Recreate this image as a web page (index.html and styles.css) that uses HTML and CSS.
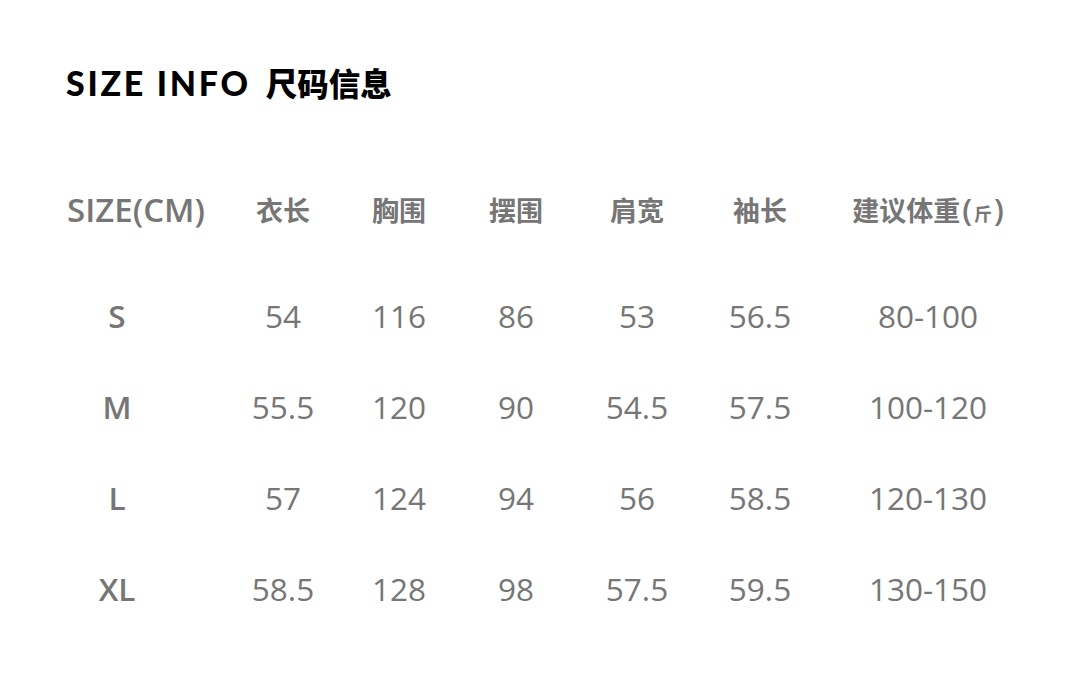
FILE: index.html
```html
<!DOCTYPE html>
<html lang="zh">
<head>
<meta charset="utf-8">
<title>Size Info</title>
<link rel="stylesheet" href="styles.css">
</head>
<body>
<div class="page">
  <h1 class="title"><span class="title-en">SIZE INFO</span><span class="title-cn">尺码信息</span></h1>
  <div class="table">
    <div class="cell head en">SIZE(CM)</div>
    <div class="cell head">衣长</div>
    <div class="cell head">胸围</div>
    <div class="cell head">摆围</div>
    <div class="cell head">肩宽</div>
    <div class="cell head">袖长</div>
    <div class="cell head">建议体重<span class="unit">(<small>斤</small>)</span></div>

    <div class="cell size">S</div>
    <div class="cell">54</div>
    <div class="cell">116</div>
    <div class="cell">86</div>
    <div class="cell">53</div>
    <div class="cell">56.5</div>
    <div class="cell">80-100</div>

    <div class="cell size">M</div>
    <div class="cell">55.5</div>
    <div class="cell">120</div>
    <div class="cell">90</div>
    <div class="cell">54.5</div>
    <div class="cell">57.5</div>
    <div class="cell">100-120</div>

    <div class="cell size">L</div>
    <div class="cell">57</div>
    <div class="cell">124</div>
    <div class="cell">94</div>
    <div class="cell">56</div>
    <div class="cell">58.5</div>
    <div class="cell">120-130</div>

    <div class="cell size">XL</div>
    <div class="cell">58.5</div>
    <div class="cell">128</div>
    <div class="cell">98</div>
    <div class="cell">57.5</div>
    <div class="cell">59.5</div>
    <div class="cell">130-150</div>
  </div>
</div>
</body>
</html>
```

FILE: styles.css
```css
html, body {
  margin: 0;
  padding: 0;
  background: #ffffff;
}

.page {
  width: 1080px;
  height: 680px;
  box-sizing: border-box;
  padding-top: 60px;
  overflow: hidden;
}

.title {
  margin: 0 0 0 66px;
  height: 44px;
  line-height: 44px;
  color: #000;
  font-weight: 900;
  white-space: nowrap;
}

.title-en {
  font-family: "Lato", "Noto Sans", sans-serif;
  font-size: 34px;
  font-weight: 900;
  letter-spacing: 2.7px;
}

.title-cn {
  font-family: "Noto Sans CJK SC", sans-serif;
  font-size: 31.5px;
  font-weight: 900;
  margin-left: 15px;
}

.table {
  margin-top: 44px;
  margin-left: 20px;
  display: grid;
  grid-template-columns: 194px 138px 94px 140px 102px 144px 192px;
  grid-template-rows: 123px repeat(4, 91px);
  align-items: center;
  justify-items: center;
  color: #767676;
}

.cell {
  font-family: "Open Sans", "Noto Sans CJK SC", sans-serif;
  font-size: 31.5px;
  font-weight: 400;
  white-space: nowrap;
  line-height: 1;
  margin-top: -1px;
}

.head {
  font-family: "Noto Sans CJK SC", sans-serif;
  font-size: 27px;
  font-weight: 700;
  margin-top: 0;
}

.head.en {
  font-family: "Open Sans", sans-serif;
  font-size: 33px;
  font-weight: 600;
  margin-left: 38px;
}

.unit {
  font-family: "Open Sans", sans-serif;
  font-weight: 600;
  font-size: 31px;
  margin-left: 2px;
}

.unit small {
  font-family: "Noto Sans CJK SC", sans-serif;
  font-size: 18px;
  font-weight: 700;
  margin: 0 2px;
}

.size {
  font-weight: 600;
}
```
